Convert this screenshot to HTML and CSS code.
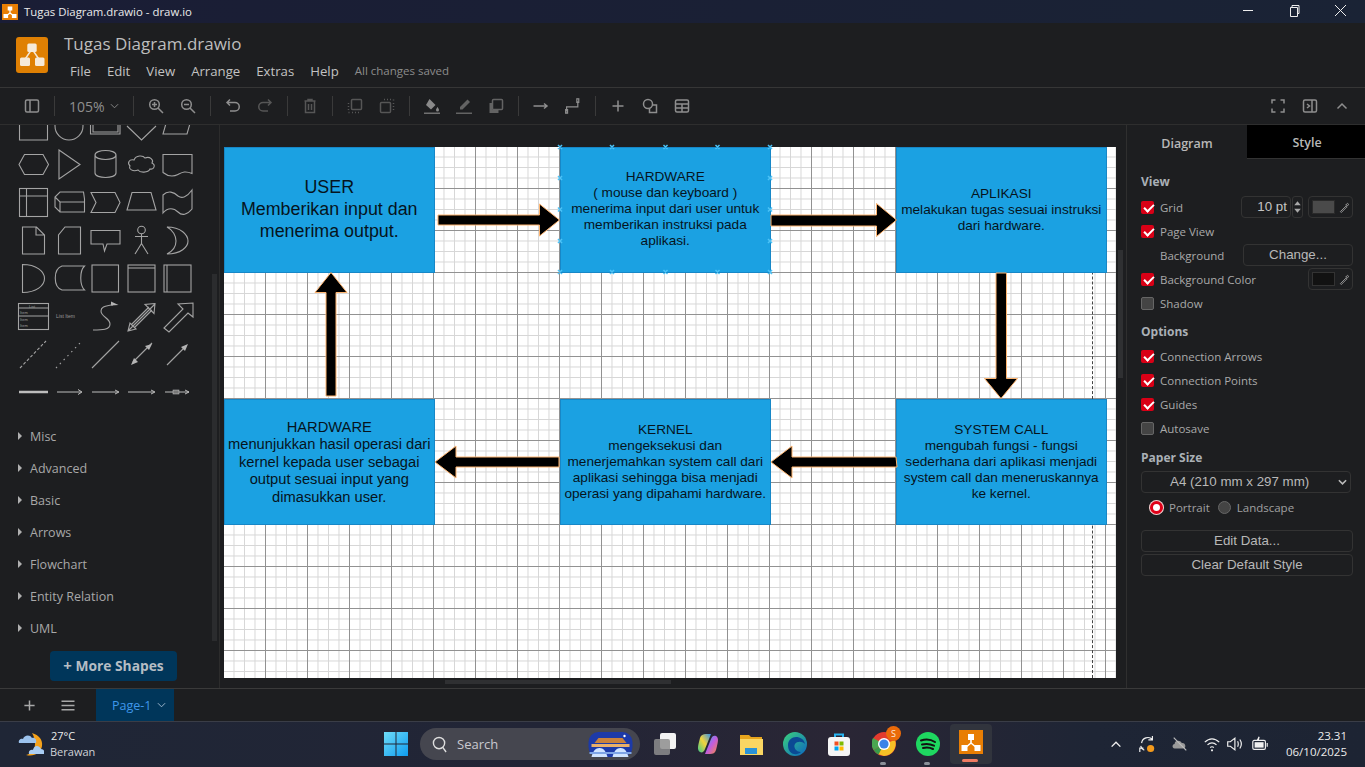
FILE: index.html
```html
<!DOCTYPE html>
<html lang="en">
<head>
<meta charset="utf-8">
<title>Tugas Diagram.drawio - draw.io</title>
<link rel="stylesheet" href="styles.css">
</head>
<body>
<div class="app">
  <div class="titlebar">
    <svg class="title-logo" viewBox="0 0 16 16"><rect width="16" height="16" fill="#e87e04"/><path d="M8 6v3M8 9l-4 3M8 9l4 3" stroke="#fff" stroke-width="1.2" fill="none"/><rect x="5.7" y="2.5" width="4.6" height="4" fill="#fff"/><rect x="1.5" y="10" width="4.6" height="4" fill="#fff"/><rect x="9.9" y="10" width="4.6" height="4" fill="#fff"/></svg>
    <span class="title-text">Tugas Diagram.drawio - draw.io</span>
    <div class="winctl">
      <svg viewBox="0 0 46 23" class="winbtn"><path d="M18 10.500h10" stroke="#eee" fill="none"/></svg>
      <svg viewBox="0 0 46 23" class="winbtn"><path d="M19.500 7.500h7v9h-7zM21 7.500v-2h7v8h-1.500" stroke="#eee" fill="none"/></svg>
      <svg viewBox="0 0 46 23" class="winbtn"><path d="M18 5l11 11M29 5L18 16" stroke="#eee" fill="none"/></svg>
    </div>
  </div>

  <header class="header">
    <svg class="logo" viewBox="0 0 32 36"><rect width="32" height="36" rx="3" fill="#df8003"/><path d="M16 12L8.500 23M16 12l7.500 11" stroke="#f4e6d6" stroke-width="1.400" fill="none"/><rect x="11.300" y="6.500" width="9.400" height="8.500" rx="1.500" fill="#f6ead9"/><rect x="4" y="20.500" width="10" height="8.500" rx="1.500" fill="#f6ead9"/><rect x="19" y="20.500" width="9.500" height="8.500" rx="1.500" fill="#f6ead9"/></svg>
    <div class="header-text">
      <div class="doc-title">Tugas Diagram.drawio</div>
      <nav class="menu">
        <span class="menu-item">File</span><span class="menu-item">Edit</span><span class="menu-item">View</span><span class="menu-item">Arrange</span><span class="menu-item">Extras</span><span class="menu-item">Help</span><span class="saved">All changes saved</span>
      </nav>
    </div>
  </header>

  <div class="toolbar">
    <button class="tb"><svg viewBox="0 0 16 16"><rect x="1.500" y="2" width="13" height="12" rx="1.500"/><path d="M6 2v12"/></svg></button>
    <i class="sep"></i>
    <div class="zoom-level">105%<svg viewBox="0 0 10 6"><path d="M1 1l4 4 4-4"/></svg></div>
    <i class="sep"></i>
    <button class="tb"><svg viewBox="0 0 16 16"><circle cx="6.500" cy="6.500" r="4.800"/><path d="M10 10l5 5M4 6.500h5M6.500 4v5"/></svg></button>
    <button class="tb"><svg viewBox="0 0 16 16"><circle cx="6.500" cy="6.500" r="4.800"/><path d="M10 10l5 5M4 6.500h5"/></svg></button>
    <i class="sep"></i>
    <button class="tb"><svg viewBox="0 0 16 16"><path d="M5 1.500L2 4.500l3 3M2 4.500h8a4 4 0 0 1 0 8.500H5"/></svg></button>
    <button class="tb dim"><svg viewBox="0 0 16 16"><path d="M11 1.500l3 3-3 3M14 4.500H6a4 4 0 0 0 0 8.500h5"/></svg></button>
    <i class="sep"></i>
    <button class="tb dim"><svg viewBox="0 0 16 16"><path d="M2.500 3h11M6 3V1.500h4V3M3.500 3v11.500h9V3M6.500 6v6M9.500 6v6"/></svg></button>
    <i class="sep"></i>
    <button class="tb dim"><svg viewBox="0 0 16 16"><rect x="4.500" y="1.500" width="10" height="10" rx="1"/><path d="M1.500 5v1M1.500 8v1M1.500 11v1M1.500 14.500h1M5 14.500h1M8 14.500h1M11 14.500h1" /></svg></button>
    <button class="tb dim"><svg viewBox="0 0 16 16"><rect x="1.500" y="4.500" width="10" height="10" rx="1"/><path d="M5 1.500h1M8 1.500h1M11 1.500h1M14.500 1.500v1M14.500 5v1M14.500 8v1M14.500 11v1"/></svg></button>
    <i class="sep"></i>
    <button class="tb"><svg viewBox="0 0 16 16"><path class="solid" d="M5.500 1l6 6-4.500 4.500L2 7z"/><path class="solid" d="M13.500 9s1.500 2 1.500 3a1.500 1.500 0 0 1-3 0c0-1 1.500-3 1.500-3z"/><path class="thick" d="M0 15.500h16"/></svg></button>
    <button class="tb soft"><svg viewBox="0 0 16 16"><path class="solid" d="M11.500 1.500l2.500 2.500-7.500 7.500H4V9z"/><path class="thick" d="M0 15.500h16"/></svg></button>
    <button class="tb soft"><svg viewBox="0 0 16 16"><path class="solid" d="M1.500 5h3v7h6v3h-9z"/><rect x="4.500" y="1.500" width="10" height="10" rx="1"/></svg></button>
    <i class="sep"></i>
    <button class="tb"><svg viewBox="0 0 16 16"><path d="M0.500 8h13M11 5.500L14 8l-3 2.500" /></svg></button>
    <button class="tb"><svg viewBox="0 0 20 20"><path d="M2 17v-6h14V4M2 17"/><rect x="0.800" y="14.500" width="2.400" height="4.500"/><rect x="14.800" y="1" width="2.400" height="4.500"/></svg></button>
    <i class="sep"></i>
    <button class="tb"><svg viewBox="0 0 16 16"><path d="M8 2.500v11M2.500 8h11"/></svg></button>
    <button class="tb"><svg viewBox="0 0 16 16"><circle cx="6" cy="6" r="4.500"/><path d="M10 7h4.500v7.500H7.500V10.500"/></svg></button>
    <button class="tb"><svg viewBox="0 0 16 16"><rect x="1.500" y="2" width="13" height="12" rx="1.500"/><path d="M1.500 6h13M1.500 10h13M8 6v8"/></svg></button>
    <div class="toolbar-right">
      <button class="tb"><svg viewBox="0 0 16 16"><path d="M2 5.500V2h3.500M10.500 2H14v3.500M14 10.500V14h-3.500M5.500 14H2v-3.500"/></svg></button>
      <button class="tb"><svg viewBox="0 0 16 16"><rect x="1.500" y="2" width="13" height="12" rx="1.500"/><path d="M10 2v12M5 6l2.500 2L5 10"/></svg></button>
      <button class="tb"><svg viewBox="0 0 16 16"><path d="M3.500 10.500L8 6l4.500 4.500"/></svg></button>
    </div>
  </div>

  <div class="main">
    <aside class="sidebar">
      <svg class="shapes" viewBox="0 125 212 285">
        <g class="sh">
          <path d="M19.500 120v20h28v-20"/><circle cx="69" cy="126" r="14"/><path d="M90.500 120v14h29.500v-14M93 120v12h25v-12"/><path d="M127 126l14.500 14 14.500-14"/><path d="M167 120l-4 14h24l4-14"/>
          <path d="M19 164.500l5.500-10h18.500l5.500 10-5.500 10H24.500z"/><path d="M59 150l21 14.500L59 179z"/><path d="M95 155c0-6 21-6 21 0v18c0 6-21 6-21 0zM95 155c0 6 21 6 21 0"/><path d="M134 160c2-5 9-5 11-2 5-2 9 2 7 5 4 2 2 7-2 6-2 4-10 4-12 1-5 2-10-1-8-4-3-3-1-7 4-6z"/><path d="M163 154.500h29v19c-7-3-10-1-14 1s-10 2-15-2z"/>
          <rect x="19.500" y="188.500" width="28" height="28"/><path d="M26.500 188.500v28M19.500 196h28"/>
          <path d="M55 197v10l5 5h24.500v-13l-1-7H60zM55 197l5 5h24.500M60 202v10"/>
          <path d="M91 192.500h24l5 10-5 10H91l5-10z"/><path d="M132 192.500h19l5 17.500h-29z"/><path d="M163 195c5-5 11-3 15 1 4 3 9 1 14-6v19c-5 6-10 7-14 3s-10-5-15 1z"/>
          <path d="M22.500 227h14l8 8v19h-22zM36 227v8h8"/><path d="M65 227h15.500v27h-22v-19z"/><path d="M91 230.500h29v13.500h-13l-2.500 7-1.500-7H91z"/><circle cx="141.500" cy="230" r="3.800"/><path d="M141.500 234v9.500M135 236.500h13M135 254l6.500-10.500L148 254"/><path d="M167 227c14 0 21 8 21 14s-7 13-21 13c6-3 9-8 9-13s-3-11-9-14z"/>
          <path d="M22.500 264.500c14 0 22 7 22 14s-8 14-22 14z"/><path d="M62 266h22.500c-5 5-5 19 0 24H62c-9-3-9-21 0-24z"/><rect x="92" y="265" width="26.500" height="27"/><rect x="128" y="265" width="27" height="27"/><path d="M128 268h27"/><rect x="164" y="265" width="27" height="27"/><path d="M167 265v27"/>
          <rect x="18.500" y="303.500" width="30" height="26"/><path d="M18.500 308h30M18.500 316h30"/>
          <path d="M93 330c9 0 17 0 17-6s-9-7-9-13c0-5 6-5 10-6h2"/><path class="fill" d="M111 305.500l7.500-.5-7.500-3.500z"/>
          <path d="M128 331l27-27M155 303.500l-10 1 9 9zM128 331l2-8 6 6zM131 325l18-18M134 328l18-18"/>
          <path d="M164 328l5 4 19-19 5 4 0-14-15 1 5 5z"/>
        </g>
        <g class="sh">
          <path class="dash" d="M20 368l26-27"/><path class="dot" d="M56 368l26-27"/><path d="M92 368l27-27"/><path d="M133 362l19-19"/><path class="fill" d="M131 365l3-7 4 4zM152 344l-7 2 4 4z"/><path d="M167 365l19-19"/><path class="fill" d="M188 344l-7 3 4 4z"/>
        </g>
        <g>
          <path class="thickl" d="M19 392h29"/>
          <path class="lnk" d="M57 392h24M78 389.500l4 2.500-4 2.500M92 392h26M115 390l4 2-4 2M128 392h26M151 390l4 2-4 2M165 392h24M185 390l4 2-4 2"/>
          <rect class="mini" x="173" y="390" width="6" height="4"/>
        </g>
        <text class="tiny" x="56" y="318">List Item</text>
        <text class="tiny tw" x="29" y="307.500">List</text>
        <text class="tiny tw" x="20" y="313.500">Item</text>
        <text class="tiny tw" x="20" y="320.500">Item</text>
        <text class="tiny tw" x="20" y="326.500">Item</text>
      </svg>
      <ul class="cats">
        <li class="cat">Misc</li><li class="cat">Advanced</li><li class="cat">Basic</li><li class="cat">Arrows</li><li class="cat">Flowchart</li><li class="cat">Entity Relation</li><li class="cat">UML</li>
      </ul>
      <div class="more"><span class="more-plus">+</span> More Shapes</div>
      <i class="side-scroll"></i>
    </aside>

    <section class="canvas">
      <div class="page">
        <i class="break-line"></i>
      </div>
      <div class="node n-a big">USER<br>Memberikan input dan<br>menerima output.</div>
      <div class="node n-b">HARDWARE<br>( mouse dan keyboard )<br>menerima input dari user untuk<br>memberikan instruksi pada<br>aplikasi.</div>
      <div class="node n-c">APLIKASI<br>melakukan tugas sesuai instruksi<br>dari hardware.</div>
      <div class="node n-d">HARDWARE<br>menunjukkan hasil operasi dari<br>kernel kepada user sebagai<br>output sesuai input yang<br>dimasukkan user.</div>
      <div class="node n-e">KERNEL<br>mengeksekusi dan<br>menerjemahkan system call dari<br>aplikasi sehingga bisa menjadi<br>operasi yang dipahami hardware.</div>
      <div class="node n-f">SYSTEM CALL<br>mengubah fungsi - fungsi<br>sederhana dari aplikasi menjadi<br>system call dan meneruskannya<br>ke kernel.</div>
      <svg class="overlay" viewBox="220 125 906 563">
        <g class="arrows">
          <path d="M438 215h101.500v-11l20 16-20 16v-11H438z"/>
          <path d="M771 215h105.500v-11.500l20 16.500-20 16.500V226H771z"/>
          <path d="M996 273h10.500v105.500h11l-16.500 20-16.500-20h11.500z"/>
          <path d="M326 396V292.500h-11l16-20 16 20h-11V396z"/>
          <path d="M559 457H456v-11l-21 16 21 16v-11h103z"/>
          <path d="M896 457H792v-11l-21 16 21 16v-11h105z"/>
        </g>
        <g class="handles">
          <path d="M558.500 145.500l3 3m0-3l-3 3M610.500 145.500l3 3m0-3l-3 3M664 145.500l3 3m0-3l-3 3M716 145.500l3 3m0-3l-3 3M768.500 145.500l3 3m0-3l-3 3"/>
          <path d="M558.500 176.500l3 3m0-3l-3 3M768.500 176.500l3 3m0-3l-3 3M558.500 208l3 3m0-3l-3 3M768.500 208l3 3m0-3l-3 3M558.500 239.500l3 3m0-3l-3 3M768.500 239.500l3 3m0-3l-3 3"/>
          <path d="M558.500 270.500l3 3m0-3l-3 3M610.500 270.500l3 3m0-3l-3 3M664 270.500l3 3m0-3l-3 3M716 270.500l3 3m0-3l-3 3M768.500 270.500l3 3m0-3l-3 3"/>
        </g>
      </svg>
      <i class="vscroll"></i>
      <i class="hscroll"></i>
    </section>

    <aside class="panel">
      <div class="tabs"><div class="tab tab-on">Diagram</div><div class="tab tab-off">Style</div></div>
      <div class="panel-body">
        <h3 class="sect sect-view">View</h3>
        <div class="row"><i class="cb on"></i><span>Grid</span>
          <div class="row-end"><div class="inp inp-pt">10 pt</div><div class="spin"><svg viewBox="0 0 11 20"><path d="M5.500 3l4 5h-8zM5.500 17l4-5h-8z"/></svg></div><div class="swatch"><i class="sw sw-grey"></i><svg viewBox="0 0 12 12" class="pick"><path d="M1.500 10.500l6-6 1 1-6 6zM7 3l2 2M8 2.500l1.500-1 1 1-1 1.500z"/></svg></div></div>
        </div>
        <div class="row"><i class="cb on"></i><span>Page View</span></div>
        <div class="row"><span class="nocb">Background</span><div class="row-end"><div class="btn btn-change">Change...</div></div></div>
        <div class="row"><i class="cb on"></i><span>Background Color</span><div class="row-end"><div class="swatch"><i class="sw sw-dark"></i><svg viewBox="0 0 12 12" class="pick"><path d="M1.500 10.500l6-6 1 1-6 6zM7 3l2 2M8 2.500l1.500-1 1 1-1 1.500z"/></svg></div></div></div>
        <div class="row"><i class="cb"></i><span>Shadow</span></div>
        <h3 class="sect sect-opt">Options</h3>
        <div class="row"><i class="cb on"></i><span>Connection Arrows</span></div>
        <div class="row"><i class="cb on"></i><span>Connection Points</span></div>
        <div class="row"><i class="cb on"></i><span>Guides</span></div>
        <div class="row"><i class="cb"></i><span>Autosave</span></div>
        <h3 class="sect sect-paper">Paper Size</h3>
        <div class="select">A4 (210 mm x 297 mm)<svg viewBox="0 0 10 6"><path d="M1 1l4 4 4-4"/></svg></div>
        <div class="radios"><i class="radio radio-on"></i><span>Portrait</span><i class="radio"></i><span>Landscape</span></div>
        <div class="btn btn-wide btn-edit">Edit Data...</div>
        <div class="btn btn-wide">Clear Default Style</div>
      </div>
    </aside>
  </div>

  <div class="pagebar">
    <svg class="pb-ic" viewBox="0 0 14 14"><path d="M7 1.500v11M1.500 7h11"/></svg>
    <svg class="pb-ic pb-menu" viewBox="0 0 16 14"><path d="M1 2.500h14M1 7h14M1 11.500h14"/></svg>
    <div class="page-tab">Page-1<svg viewBox="0 0 10 6"><path d="M1 1l4 4 4-4"/></svg></div>
  </div>

  <footer class="taskbar">
    <div class="weather">
      <svg class="wx" viewBox="0 0 26 26"><path d="M14 2c7 2 11 7 10 13-1 7-8 11-16 9 5-1 9-5 9-11 0-4-1-8-3-11z" fill="#f5a21b"/><path d="M1 12c-1-3 2-5 4-4 1-4 7-5 9-1 3-1 5 2 4 5z" fill="#9cc3ee"/><path d="M11 23c-1-3 2-5 4-4 1-5 6-5 8-1 3 0 4 3 3 5z" fill="#a9cdf3"/></svg>
      <div class="wx-text"><div class="wx-temp">27°C</div><div class="wx-desc">Berawan</div></div>
    </div>
    <div class="dock">
      <svg class="win" viewBox="0 0 24 24"><defs><linearGradient id="wg" x1="0" y1="0" x2="1" y2="1"><stop offset="0" stop-color="#6fdcf8"/><stop offset="1" stop-color="#0e9cf0"/></linearGradient></defs><path fill="url(#wg)" d="M0 0h11.500v11.500H0zM12.500 0H24v11.500H12.500zM0 12.500h11.500V24H0zM12.500 12.500H24V24H12.500z"/></svg>
      <div class="search">
        <svg class="search-ic" viewBox="0 0 16 18"><circle cx="7.500" cy="7.500" r="6" /><path d="M11.500 12l3.500 5"/></svg>
        <span>Search</span>
        <svg class="search-art" viewBox="0 0 46 28"><rect x="1" y="2" width="44" height="25" rx="10" fill="#1d3aa8"/><path d="M7 13h32l-4-5H11z" fill="#c9823c"/><path d="M4 14h38v3H4z" fill="#eab06a"/><path d="M4 27c1-4 3-9 8-9s7 5 8 9zM25 27c1-4 3-9 8-9s7 5 8 9z" fill="#cfe3ff"/><path d="M2 22h42v2H2z" fill="#7ea4e6"/><circle cx="37" cy="6" r="1.200" fill="#fff"/></svg>
      </div>
      <svg class="dk dk-view" viewBox="0 0 24 24"><rect x="7" y="1" width="16" height="16" rx="2" fill="#f3f3f3"/><rect x="1" y="7" width="16" height="16" rx="2" fill="#8d8d8d" opacity=".85"/></svg>
      <svg class="dk dk-tight" viewBox="0 0 24 24"><defs><linearGradient id="cg" x1="0" y1="0" x2="1" y2="1"><stop offset="0" stop-color="#2bb5f0"/><stop offset=".5" stop-color="#c05ce0"/><stop offset="1" stop-color="#fb8a3a"/></linearGradient><linearGradient id="cg2" x1="0" y1="1" x2="1" y2="0"><stop offset="0" stop-color="#3cc88a"/><stop offset=".5" stop-color="#f4d33c"/><stop offset="1" stop-color="#2f8ff0"/></linearGradient></defs><path fill="url(#cg2)" d="M4 20c-3-2-2-6-1-10l1-4c1-3 3-4 6-4h5L9 17c-1 3-3 4-5 3z"/><path fill="url(#cg)" d="M20 4c3 2 2 6 1 10l-1 4c-1 3-3 4-6 4H9l6-15c1-3 3-4 5-3z"/></svg>
      <svg class="dk" viewBox="0 0 24 24"><path d="M1 3h9l2 2h11v18H1z" fill="#e7a51d"/><path d="M1 7h23v16H1z" fill="#fad663"/><rect x="6" y="16" width="12" height="6" fill="#2a93d8"/></svg>
      <svg class="dk" viewBox="0 0 24 24"><defs><linearGradient id="eg" x1="0" y1="0" x2="1" y2="1"><stop offset="0" stop-color="#3bd37c"/><stop offset="1" stop-color="#0c65c2"/></linearGradient></defs><circle cx="12" cy="12" r="12" fill="url(#eg)"/><path d="M5 13c0-5 4-8 8-8 4 0 8 2 9 7-3-3-8-3-10 0-2 3 1 8 6 8-4 4-13 3-13-7z" fill="#0b4a94"/></svg>
      <svg class="dk dk-loose" viewBox="0 0 24 24"><path d="M8 6V2.500h8V6" fill="none" stroke="#27b5f2" stroke-width="2"/><rect x="1" y="5" width="22" height="19" rx="3" fill="#f5f5f5"/><path d="M7.500 9.500h4v4h-4z" fill="#f25022"/><path d="M12.500 9.500h4v4h-4z" fill="#7fba00"/><path d="M7.500 14.500h4v4h-4z" fill="#00a4ef"/><path d="M12.500 14.500h4v4h-4z" fill="#ffb900"/></svg>
      <div class="dk-wrap">
        <svg class="dk" viewBox="0 0 24 24"><circle cx="12" cy="12" r="12" fill="#e33b2e"/><path d="M12 12L1.600 18A12 12 0 0 1 1 6z" fill="#4aa651"/><path d="M12 24a12 12 0 0 0 11-16L12 12 6 22z" fill="#f6c026"/><path d="M1.600 18L12 12l-5.500 10.600A12 12 0 0 1 1.600 18z" fill="#3a9a4a"/><circle cx="12" cy="12" r="6" fill="#fff"/><circle cx="12" cy="12" r="4.600" fill="#3b82e8"/></svg>
        <span class="badge">S</span>
        <i class="pip"></i>
      </div>
      <div class="dk-wrap">
        <svg class="dk" viewBox="0 0 24 24"><circle cx="12" cy="12" r="12" fill="#1ed760"/><path d="M5 8.500c5-1.500 10-1 14 1.500M6 12.500c4-1 8-.8 12 1.200M7 16c3-.7 7-.5 10 1" fill="none" stroke="#121212" stroke-width="2" stroke-linecap="round"/></svg>
        <i class="pip"></i>
      </div>
      <div class="dk-active">
        <svg class="dk" viewBox="0 0 24 24"><rect width="24" height="24" fill="#e87e04"/><path d="M12 9v4M12 13l-6 5M12 13l6 5" stroke="#fff" stroke-width="1.600" fill="none"/><rect x="9" y="4" width="6" height="6" fill="#fff"/><rect x="2.500" y="15" width="6" height="6" fill="#fff"/><rect x="15.500" y="15" width="6" height="6" fill="#fff"/></svg>
        <i class="pip pip-on"></i>
      </div>
    </div>
    <div class="tray">
      <svg class="tr tr-chev" viewBox="0 0 16 16"><path d="M3 11l5-5 5 5"/></svg>
      <svg class="tr tr-sync" viewBox="0 0 20 20"><path d="M4 9a7 7 0 0 1 12-4M16 1v4.500h-4.500M3 12a7 7 0 0 0 4 5M2 19v-4.500h4"/><circle class="tr-dot" cx="14" cy="15" r="4"/></svg>
      <svg class="tr tr-cloud" viewBox="0 0 20 20"><path class="tr-fill" d="M4 15c-3 0-3-5 0-5 0-4 6-5 8-1 4-1 6 6 1 6z"/><path d="M3 3l14 14"/></svg>
      <svg class="tr tr-wifi" viewBox="0 0 20 20"><path d="M2 8c5-5 11-5 16 0M5 11c3-3 7-3 10 0M8 14c1-1 3-1 4 0"/><circle class="tr-solid" cx="10" cy="17" r="1.200"/></svg>
      <svg class="tr tr-vol" viewBox="0 0 20 20"><path d="M3 7.500v5h3l5 4v-13l-5 4zM14 7c1 2 1 4 0 6M16.500 5c2 3 2 7 0 10"/></svg>
      <svg class="tr tr-batt" viewBox="0 0 20 20"><rect x="2" y="6" width="14" height="10" rx="1.500"/><rect class="tr-solid" x="4" y="8" width="10" height="6"/><path d="M18 9v4M7 6l2-4-1 4"/></svg>
    </div>
    <div class="clock"><div>23.31</div><div>06/10/2025</div></div>
  </footer>
</div>
</body>
</html>
```

FILE: styles.css
```css
* { box-sizing: border-box; }
html, body { margin: 0; height: 100%; overflow: hidden; }
body { font-family: "Open Sans", "Noto Sans", sans-serif; color: #c4c4c4; background: #1d1e20; }
ul { list-style: none; margin: 0; padding: 0; }
h3 { margin: 0; }
i { display: block; font-style: normal; }
button { padding: 0; border: 0; background: none; }

.app { width: 1365px; height: 767px; display: flex; flex-direction: column; }

.titlebar { height: 23px; flex: none; display: flex; align-items: center; background: linear-gradient(90deg, #1a1d35 0%, #1a2035 55%, #1a2335 100%); }
.title-logo { width: 16px; height: 16px; margin-left: 2px; }
.title-text { margin-left: 6px; font-size: 11.400px; color: #eaeaea; white-space: nowrap; }
.winctl { margin-left: auto; display: flex; margin-right: 2px; }
.winbtn { width: 46px; height: 23px; display: block; }

.header { height: 64px; flex: none; display: flex; background: #1d1e20; padding: 14px 0 0 16px; }
.logo { width: 32px; height: 36px; }
.header-text { margin-left: 16px; margin-top: -4px; }
.doc-title { font-size: 17px; line-height: 22px; color: #bdbdbd; }
.menu { display: flex; align-items: center; margin-top: 7px; margin-left: 6px; font-size: 13.200px; line-height: 18px; }
.menu-item { margin-right: 16px; color: #c2c2c2; }
.saved { font-size: 11.500px; color: #8c8c8c; margin-left: 0; }

.toolbar { height: 38px; flex: none; display: flex; align-items: center; padding-left: 16px; background: #1d1e20; border-top: 1px solid #363636; border-bottom: 1px solid #2e2e2e; }
.tb { width: 32px; height: 36px; display: flex; align-items: center; justify-content: center; flex: none; }
.tb svg { width: 16px; height: 16px; fill: none; stroke: #8e8e8e; stroke-width: 1.500; }
.tb .solid { fill: #8a8a8a; stroke: none; }
.tb .thick { stroke-width: 2; stroke: #707070; }
.tb.dim svg { stroke: #565656; }
.tb.soft svg { stroke: #636363; }
.tb.soft .solid { fill: #636363; }
.tb.soft .thick { stroke: #636363; }
.sep { width: 1px; height: 20px; background: #3a3a3a; margin: 0 6px; flex: none; }
.zoom-level { width: 66px; display: flex; align-items: center; padding-left: 8px; font-size: 14px; color: #8e8e8e; }
.zoom-level svg { width: 9px; height: 6px; margin-left: 5px; fill: none; stroke: #8e8e8e; }
.toolbar-right { margin-left: auto; display: flex; margin-right: 7px; }

.main { flex: 1; display: flex; min-height: 0; }

.sidebar { width: 220px; flex: none; position: relative; background: #1d1e20; border-right: 1px solid #2c2c2c; }
.shapes { display: block; width: 212px; height: 285px; }
.sh { fill: none; stroke: #a4a4a4; stroke-width: 1.100; }
.sh .fill { fill: #b4b4b4; stroke: none; }
.sh .dash { stroke-dasharray: 3 2; }
.sh .dot { stroke-dasharray: 1.500 4; }
.thickl { stroke: #bdbdbd; stroke-width: 2.500; fill: none; }
.lnk { stroke: #bdbdbd; stroke-width: 1; fill: none; }
.mini { fill: #777; stroke: #ccc; stroke-width: .5; }
.tiny { font-family: "Liberation Sans", sans-serif; font-size: 5px; fill: #9a9a9a; }
.tw { font-size: 4px; }
.cats { padding-top: 11px; }
.cat { height: 32px; line-height: 32px; padding-left: 30px; font-size: 12.500px; color: #a8a8a8; position: relative; }
.cat::before { content: ""; position: absolute; left: 18px; top: 11px; border-left: 4px solid #b0b0b0; border-top: 4px solid transparent; border-bottom: 4px solid transparent; }
.more { margin: 6px 0 0 50px; width: 127px; height: 30px; line-height: 29px; text-align: center; background: #00365a; border-radius: 4px; font-weight: 700; font-size: 13.800px; color: #b5bdc4; white-space: nowrap; }
.more-plus { font-size: 15px; }
.side-scroll { position: absolute; left: 212px; top: 149px; width: 5px; height: 367px; background: #2b2c2e; }

.canvas { width: 906px; flex: none; position: relative; background: #1d1e20; overflow: hidden; }
.page { position: absolute; left: 4px; top: 22px; width: 892px; height: 531px;
  background-color: #fff;
  background-image:
    linear-gradient(to right, #929292 1px, transparent 1px),
    linear-gradient(to bottom, #929292 1px, transparent 1px),
    linear-gradient(to right, #d6d6d6 1px, transparent 1px),
    linear-gradient(to bottom, #d6d6d6 1px, transparent 1px);
  background-size: 42px 42px, 42px 42px, 10.500px 10.500px, 10.500px 10.500px;
  background-position: -1px 0, 0 -1px, -1px 0, 0 -1px;
}
.break-line { position: absolute; left: 868px; top: 0; bottom: 0; border-left: 1px dashed #444; }
.node { position: absolute; width: 210.500px; height: 126px; display: flex; align-items: center; justify-content: center; text-align: center; background: #1ba1e2; border: 1px solid #1787c7; font-family: "Liberation Sans", Arial, sans-serif; font-size: 13.650px; line-height: 16px; color: #06141d; white-space: nowrap; }
.big { font-size: 17.850px; line-height: 22px; }
.n-a { left: 4px; top: 22px; padding-bottom: 2px; }
.n-b { left: 340px; top: 22px; padding-bottom: 2px; }
.n-c { left: 676px; top: 22px; padding-bottom: 1px; }
.n-d { left: 4px; top: 274px; font-size: 14.700px; line-height: 17.600px; padding-top: 1px; }
.n-e { left: 340px; top: 274px; }
.n-f { left: 676px; top: 274px; }
.overlay { position: absolute; left: 0; top: 0; width: 906px; height: 563px; }
.arrows { fill: #000; stroke: #ffb570; stroke-width: 1; }
.handles { fill: none; stroke: #4cc3f7; stroke-width: 1.500; stroke-linecap: square; }
.vscroll { position: absolute; left: 898px; top: 125px; width: 5px; height: 128px; background: #2f3032; }
.hscroll { position: absolute; left: 225px; top: 555px; width: 226px; height: 4px; background: #2f3032; }

.panel { flex: 1; background: #1d1e20; border-left: 1px solid #2f2f2f; }
.tabs { display: flex; height: 34px; }
.tab { width: 120px; font-size: 12.500px; font-weight: 600; text-align: center; line-height: 37px; color: #b8b8b8; }
.tab-off { flex: 1; background: #000; border-bottom: 1px solid #333; line-height: 35px; }
.panel-body { padding: 11px 12px 0 14px; }
.sect { font-size: 12px; font-weight: 700; line-height: 24px; color: #aab0b6; }
.sect-view { margin-bottom: 1px; }
.sect-opt { margin-top: 5px; }
.sect-paper { margin-top: 6px; }
.row { height: 24px; display: flex; align-items: center; font-size: 11.500px; color: #a9a9a9; }
.nocb { margin-left: 19px; }
.cb { width: 13px; height: 13px; margin-right: 6px; border-radius: 2px; background: #444; border: 1px solid #666; position: relative; flex: none; }
.cb.on { background: #d90016; border: 0; }
.cb.on::after { content: ""; position: absolute; left: 4.500px; top: 1.500px; width: 4px; height: 8px; border: solid #fff; border-width: 0 2px 2px 0; transform: rotate(45deg); }
.row-end { margin-left: auto; margin-right: 2px; display: flex; align-items: center; gap: 0; }
.inp { height: 22px; border: 1px solid #333; border-radius: 4px; font-family: "Liberation Sans", Arial, sans-serif; font-size: 13.330px; line-height: 20px; text-align: right; color: #c4c4c4; }
.inp-pt { width: 50px; padding-right: 3px; }
.spin { width: 11px; height: 22px; margin-left: 1px; border: 1px solid #333; border-radius: 3px; }
.spin svg { display: block; width: 9px; height: 20px; fill: #a8a8a8; }
.swatch { width: 45px; height: 22px; margin-left: 5px; border: 1px solid #333; border-radius: 4px; display: flex; align-items: center; padding-left: 3px; }
.sw { width: 23px; height: 14px; border: 1px solid #2a2a2a; }
.sw-grey { background: #4a4a4a; }
.sw-dark { background: #121212; border-color: #333; }
.pick { width: 11px; height: 11px; margin-left: 4px; fill: none; stroke: #a8a8a8; stroke-width: .9; }
.btn { height: 22px; border: 1px solid #333; border-radius: 4px; font-family: "Liberation Sans", Arial, sans-serif; font-size: 13.330px; line-height: 20px; text-align: center; color: #b8b8b8; }
.btn-change { width: 110px; }
.btn-wide { width: 212px; margin-bottom: 2px; }
.btn-edit { margin-top: 10px; }
.select { position: relative; width: 210px; height: 22px; margin-top: 1px; border: 1px solid #333; border-radius: 4px; font-family: "Liberation Sans", Arial, sans-serif; font-size: 13.330px; line-height: 20px; padding-left: 28px; color: #b8b8b8; }
.select svg { position: absolute; right: 3px; top: 7px; width: 9px; height: 6px; fill: none; stroke: #bbb; stroke-width: 1.800; }
.radios { height: 26px; display: flex; align-items: center; padding-left: 9px; font-size: 11.500px; color: #a0a0a0; margin-top: 1px; }
.radio { width: 13px; height: 13px; margin-right: 6px; border-radius: 50%; background: #444; border: 1px solid #666; flex: none; }
.radios span { margin-right: 8px; }
.radio-on { background: #fff; border: 3px solid #e00018; box-shadow: 0 0 0 1px #f4d0d0; }

.pagebar { height: 33px; flex: none; display: flex; align-items: center; background: #1d1e20; border-top: 1px solid #3a3a3a; }
.pb-ic { width: 13px; height: 13px; margin-left: 23px; fill: none; stroke: #a8a8a8; stroke-width: 1.600; flex: none; }
.pb-menu { width: 16px; margin-left: 24px; }
.page-tab { width: 78px; height: 32px; margin-left: 20px; background: #00365a; display: flex; align-items: center; padding-left: 16px; font-size: 12.500px; color: #3f97ea; }
.page-tab svg { width: 9px; height: 6px; margin-left: 6px; fill: none; stroke: #a9c2d6; }

.taskbar { height: 46px; flex: none; display: flex; align-items: center; padding-bottom: 1px; background: linear-gradient(90deg, #1f2636 0%, #222536 40%, #2a2635 62%, #1e2535 80%, #1d2433 100%); border-top: 1px solid #3a3d47; color: #ececec; }
.weather { width: 384px; flex: none; display: flex; align-items: center; padding-left: 18px; }
.wx { width: 26px; height: 26px; }
.wx-text { margin-left: 6px; font-size: 11px; line-height: 16px; }
.wx-temp { margin-left: 1px; }
.wx-desc { color: #cfd2d8; }
.dock { display: flex; align-items: center; }
.win { width: 24px; height: 24px; }
.search { width: 220px; height: 32px; margin-left: 12px; display: flex; align-items: center; border-radius: 16px; background: #45464f; padding-left: 12px; font-size: 13px; color: #c9c9cf; position: relative; }
.search-ic { width: 15px; height: 17px; fill: none; stroke: #dedede; stroke-width: 1.500; margin-right: 10px; }
.search-art { position: absolute; left: 167px; top: 2px; width: 47px; height: 28px; }
.dk { width: 24px; height: 24px; display: block; flex: none; margin-right: 20px; }
.dk-view { margin-left: 13px; margin-right: 19px; }
.dk-tight { margin-right: 19px; }
.dk-loose { margin-right: 21px; }
.dk-wrap { position: relative; margin-right: 0; }
.badge { position: absolute; left: 14px; top: -6px; width: 15px; height: 15px; border-radius: 50%; background: #ea6a0a; font-size: 9px; line-height: 15px; text-align: center; color: #ffe9d6; }
.pip { position: absolute; left: 8px; top: 30px; width: 6px; height: 3px; border-radius: 2px; background: #8b8f98; }
.dk-active { position: relative; width: 42px; height: 40px; margin-left: -10px; border-radius: 4px; background: #31343d; display: flex; align-items: center; justify-content: center; padding-bottom: 4px; }
.dk-active .dk { margin: 0; }
.pip-on { left: 12px; top: 35px; width: 16px; background: #f07a62; }
.tray { display: flex; align-items: center; margin-left: 117px; }
.tr { width: 18px; height: 18px; margin-right: 15px; fill: none; stroke: #f0f0f0; stroke-width: 1.300; flex: none; }
.tr-chev { width: 14px; height: 14px; margin-right: 15px; stroke-width: 1.600; }
.tr-sync { margin-right: 15px; }
.tr-cloud { margin-right: 14px; stroke: #bdbdbd; }
.tr-wifi { margin-right: 4px; }
.tr-vol { margin-right: 8px; }
.tr-dot { fill: #f39a1c; stroke: none; }
.tr-solid { fill: #f0f0f0; stroke: none; }
.tr-fill { fill: #9a9a9a; stroke: none; }
.tr:last-child { margin-right: 0; }
.clock { margin-left: auto; margin-right: 18px; text-align: right; font-size: 11.500px; line-height: 16px; color: #ececec; }
```
